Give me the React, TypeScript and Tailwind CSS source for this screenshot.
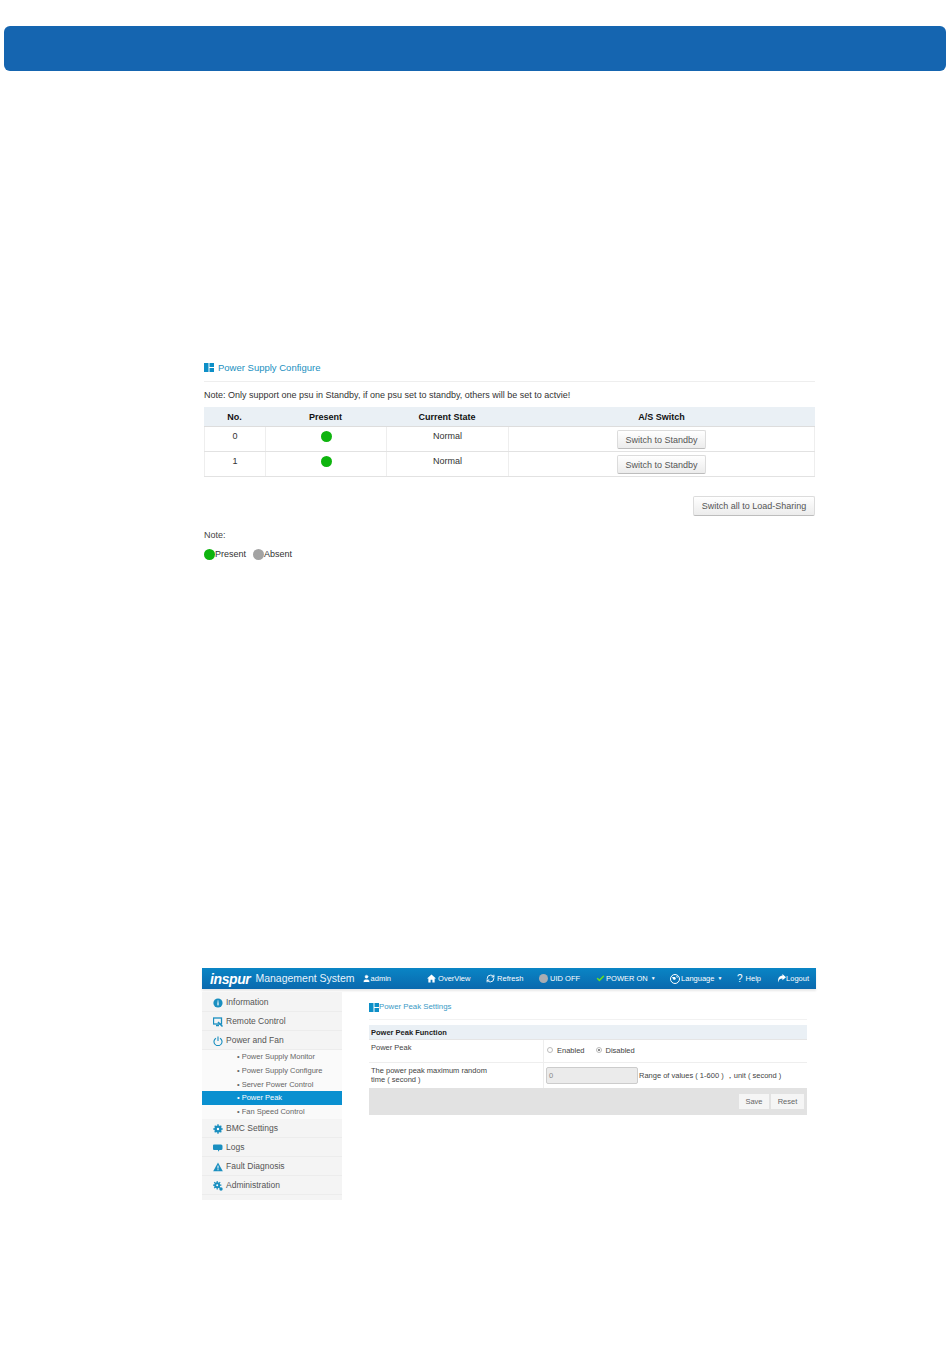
import type { ReactNode } from 'react';
import { RefreshCw, Check, User } from 'lucide-react';

function TitleIcon() {
  return (
    <svg width="10" height="9" viewBox="0 0 10 9" className="shrink-0">
      <rect x="0" y="0" width="4.5" height="9" fill="#0d8fc7" />
      <rect x="5.5" y="0" width="4.5" height="4" fill="#0d8fc7" />
      <rect x="5.5" y="5" width="4.5" height="4" fill="#0d8fc7" />
    </svg>
  );
}

function GrayButton({ label, className }: { label: string; className: string }) {
  return (
    <div className={`flex items-center justify-center rounded-[2px] border border-[#dcdcdc] border-b-[#bdbdbd] bg-gradient-to-b from-white to-[#ececec] text-[#555] ${className}`}>
      {label}
    </div>
  );
}

function PsuRow({ no }: { no: string }) {
  return (
    <div className="grid h-[25px] grid-cols-[61px_121px_122px_1fr] border-b border-[#e2e2e2] text-[9px] text-[#333]">
      <div className="border-l border-[#eee] pt-[3px] text-center">{no}</div>
      <div className="flex justify-center border-l border-[#eee] pt-[4px]">
        <span className="h-[11px] w-[11px] rounded-full bg-[#0eb40e]" />
      </div>
      <div className="border-l border-[#eee] pt-[3px] text-center">Normal</div>
      <div className="flex justify-center border-x border-[#eee] pt-[3px]">
        <GrayButton label="Switch to Standby" className="h-[19px] w-[89px]" />
      </div>
    </div>
  );
}

function PowerSupplyConfigure() {
  return (
    <section className="ml-[204px] mt-[290px] w-[611px] text-[9px] leading-[12px] text-[#333]">
      <div className="flex h-[21px] items-start gap-[4px] border-b border-[#eee] pt-[1px] text-[9.5px] text-[#1a8fc0]">
        <span className="pt-[1px]"><TitleIcon /></span>
        <span>Power Supply Configure</span>
      </div>
      <p className="mt-[7px] h-[18px]">Note: Only support one psu in Standby, if one psu set to standby, others will be set to actvie!</p>
      <div className="grid h-[20px] grid-cols-[61px_121px_122px_1fr] items-center border-b border-[#ddd] bg-[#eaf0f5] text-center font-bold text-[#111]">
        <div>No.</div>
        <div>Present</div>
        <div>Current State</div>
        <div>A/S Switch</div>
      </div>
      <PsuRow no="0" />
      <PsuRow no="1" />
      <div className="mt-[19px] flex justify-end">
        <GrayButton label="Switch all to Load-Sharing" className="h-[20px] w-[122px]" />
      </div>
      <p className="mt-[13px] text-[#444]">Note:</p>
      <div className="mt-[7px] flex items-center text-[#333]">
        <span className="h-[11px] w-[11px] rounded-full bg-[#0eb40e]" />
        <span>Present</span>
        <span className="ml-[7px] h-[11px] w-[11px] rounded-full bg-[#a3a3a3]" />
        <span>Absent</span>
      </div>
    </section>
  );
}

function TopNav() {
  return (
    <div className="flex h-[21px] items-center bg-gradient-to-b from-[#0a85c5] to-[#0a69ae] text-[7.5px] text-white shadow-[0_2px_2px_#e8e8e8]">
      <span className="ml-[8px] text-[14px] font-bold italic leading-none tracking-[-0.4px]">inspur</span>
      <span className="ml-[5px] text-[10.5px] text-[#e6f3fb]">Management System</span>
      <User className="ml-[7px] h-[9px] w-[9px]" fill="white" strokeWidth={1} />
      <span>admin</span>
      <div className="ml-[36px] flex w-[59px] items-center gap-[2px]">
        <svg width="9" height="9" viewBox="0 0 10 10" fill="white"><path d="M5 .5 0 5h1.5v4.5h2.5V6.5h2v3h2.5V5H10z" /></svg>
        <span>OverView</span>
      </div>
      <div className="flex w-[53px] items-center gap-[2px]">
        <RefreshCw className="h-[9px] w-[9px]" strokeWidth={2.5} />
        <span>Refresh</span>
      </div>
      <div className="flex w-[57px] items-center gap-[2px]">
        <span className="h-[9px] w-[9px] rounded-full bg-[#a9adb3]" />
        <span>UID OFF</span>
      </div>
      <div className="flex w-[74px] items-center gap-[1px]">
        <Check className="h-[9px] w-[9px] text-[#66dd22]" strokeWidth={4} />
        <span>POWER ON</span>
        <span className="ml-[2px] text-[5px]">▼</span>
      </div>
      <div className="flex w-[67px] items-center gap-[1px]">
        <svg width="10" height="10" viewBox="0 0 10 10">
          <circle cx="5" cy="5" r="4.5" fill="none" stroke="white" />
          <path d="M2 3h3l1 2-2 1-1-1zM6 1.5 8 3 7 4z" fill="white" />
        </svg>
        <span>Language</span>
        <span className="ml-[2px] text-[5px]">▼</span>
      </div>
      <div className="flex w-[40px] items-center gap-[3px]">
        <span className="text-[10px] leading-none">?</span>
        <span>Help</span>
      </div>
      <div className="flex items-center">
        <svg width="9" height="9" viewBox="0 0 10 10" fill="white"><path d="M6 0l4 3.5L6 7V5C3.5 5 2 6 1.5 9.5.5 5 2.5 2 6 2z" /></svg>
        <span>Logout</span>
      </div>
    </div>
  );
}

const sideIcons: Record<string, ReactNode> = {
  info: (
    <>
      <circle cx="5" cy="5" r="4.6" fill="#1a8fc0" />
      <rect x="4.4" y="4.2" width="1.2" height="3.2" fill="white" />
      <rect x="4.4" y="2.6" width="1.2" height="1" fill="white" />
    </>
  ),
  remote: (
    <>
      <rect x="0.5" y="1" width="8" height="6" fill="none" stroke="#1a8fc0" strokeWidth="1.3" />
      <path d="M3 8.5h3M5 5l4.5 4.5" stroke="#1a8fc0" strokeWidth="1.5" />
    </>
  ),
  power: (
    <>
      <path d="M3 2.2a4 4 0 1 0 4 0" fill="none" stroke="#1a8fc0" strokeWidth="1.1" />
      <path d="M5 .5v4.5" stroke="#1a8fc0" strokeWidth="1.1" />
    </>
  ),
  gear: (
    <>
      <circle cx="5" cy="5" r="3.6" fill="#1a8fc0" />
      <path d="M5 .3v9.4M.3 5h9.4M1.7 1.7l6.6 6.6M8.3 1.7 1.7 8.3" stroke="#1a8fc0" strokeWidth="1.4" />
      <circle cx="5" cy="5" r="1.2" fill="white" />
    </>
  ),
  logs: (
    <>
      <path d="M0 2.5Q0 1.5 1 1.5h7Q9.5 1.5 9.5 3v2.5Q9.5 7 8 7H6.5L5 8.8V7H1Q0 7 0 6z" fill="#1a8fc0" />
    </>
  ),
  fault: (
    <>
      <path d="M5 .5 9.8 9.3H.2z" fill="#1a8fc0" />
      <rect x="4.5" y="3.6" width="1" height="3" fill="white" />
      <rect x="4.5" y="7.2" width="1" height="1" fill="white" />
    </>
  ),
  admin: (
    <>
      <circle cx="4.2" cy="4.2" r="3" fill="#1a8fc0" />
      <path d="M4.2 0v8.4M0 4.2h8.4M1.2 1.2l6 6M7.2 1.2l-6 6" stroke="#1a8fc0" strokeWidth="1.2" />
      <circle cx="4.2" cy="4.2" r="1" fill="white" />
      <circle cx="8" cy="8" r="1.7" fill="#1a8fc0" />
    </>
  ),
};

function SideItem({ icon, label }: { icon: string; label: string }) {
  return (
    <div className="flex h-[19px] items-center gap-[3px] border-b border-[#ececec] pl-[11px] text-[8.5px] text-[#555]">
      <svg width="10" height="10" viewBox="0 0 10 10" className="mt-[1px] shrink-0">{sideIcons[icon]}</svg>
      <span>{label}</span>
    </div>
  );
}

function SubItem({ label, active }: { label: string; active?: boolean }) {
  return (
    <div className={`flex h-[13.7px] items-center pl-[35px] text-[7.5px] ${active ? 'bg-[#0a90d0] text-white' : 'text-[#666]'}`}>
      <span className="mr-[2px]">•</span>
      <span>{label}</span>
    </div>
  );
}

function Sidebar() {
  return (
    <aside className="w-[140px] shrink-0 bg-[#f4f4f4] pt-[1px]">
      <SideItem icon="info" label="Information" />
      <SideItem icon="remote" label="Remote Control" />
      <SideItem icon="power" label="Power and Fan" />
      <div className="bg-[#fafafa] pb-[1px]">
        <SubItem label="Power Supply Monitor" />
        <SubItem label="Power Supply Configure" />
        <SubItem label="Server Power Control" />
        <SubItem label="Power Peak" active />
        <SubItem label="Fan Speed Control" />
      </div>
      <SideItem icon="gear" label="BMC Settings" />
      <SideItem icon="logs" label="Logs" />
      <SideItem icon="fault" label="Fault Diagnosis" />
      <SideItem icon="admin" label="Administration" />
    </aside>
  );
}

function PeakSettings() {
  return (
    <div className="ml-[27px] w-[438px] pt-[10px] text-[7.5px] leading-[9px] text-[#444]">
      <div className="flex h-[18px] items-start border-b border-[#f2f2f2] text-[7.8px] text-[#3a9ac6]">
        <span className="pt-[1px]"><TitleIcon /></span>
        <span>Power Peak Settings</span>
      </div>
      <div className="mt-[5px] flex h-[15px] items-center border-b border-[#e5e5e5] bg-[#eaf0f5] pl-[2px] font-bold text-[#222]">Power Peak Function</div>
      <div className="grid h-[23px] grid-cols-[174px_1fr] border-b border-[#eee]">
        <div className="pl-[2px] pt-[3px]">Power Peak</div>
        <div className="flex items-center gap-[4px] border-l border-[#eee] pl-[3px] pb-[2px]">
          <span className="h-[6px] w-[6px] rounded-full border border-[#bbb]" />
          <span>Enabled</span>
          <span className="ml-[7px] flex h-[6px] w-[6px] items-center justify-center rounded-full border border-[#bbb]">
            <span className="h-[2px] w-[2px] rounded-full bg-[#666]" />
          </span>
          <span>Disabled</span>
        </div>
      </div>
      <div className="grid h-[25px] grid-cols-[174px_1fr]">
        <div className="pl-[2px] pt-[3px]">
          The power peak maximum random
          <br />
          time ( second )
        </div>
        <div className="flex items-center border-l border-[#eee] pl-[2px]">
          <div className="flex h-[17px] w-[92px] items-center rounded-[2px] border border-[#ccc] bg-[#ebebeb] pl-[2px] text-[#888]">0</div>
          <span className="ml-[1px]">Range of values ( 1-600 ) ，unit ( second )</span>
        </div>
      </div>
      <div className="flex h-[27px] items-center justify-end gap-[2px] bg-[#e2e2e2] pr-[3px] text-[#666]">
        <div className="flex h-[15px] w-[30px] items-center justify-center bg-[#f5f5f5]">Save</div>
        <div className="flex h-[15px] w-[33px] items-center justify-center bg-[#f5f5f5]">Reset</div>
      </div>
    </div>
  );
}

function PowerPeakScreenshot() {
  return (
    <section className="ml-[202px] mt-[408px] w-[614px]">
      <TopNav />
      <div className="mt-[3px] flex h-[208px]">
        <Sidebar />
        <PeakSettings />
      </div>
    </section>
  );
}

export default function App() {
  return (
    <div className="h-[1369px] overflow-hidden bg-white pt-[26px] font-['Liberation_Sans',sans-serif]">
      <div className="mx-[4px] h-[45px] rounded-[6px] bg-[#1565b0]" />
      <PowerSupplyConfigure />
      <PowerPeakScreenshot />
    </div>
  );
}
